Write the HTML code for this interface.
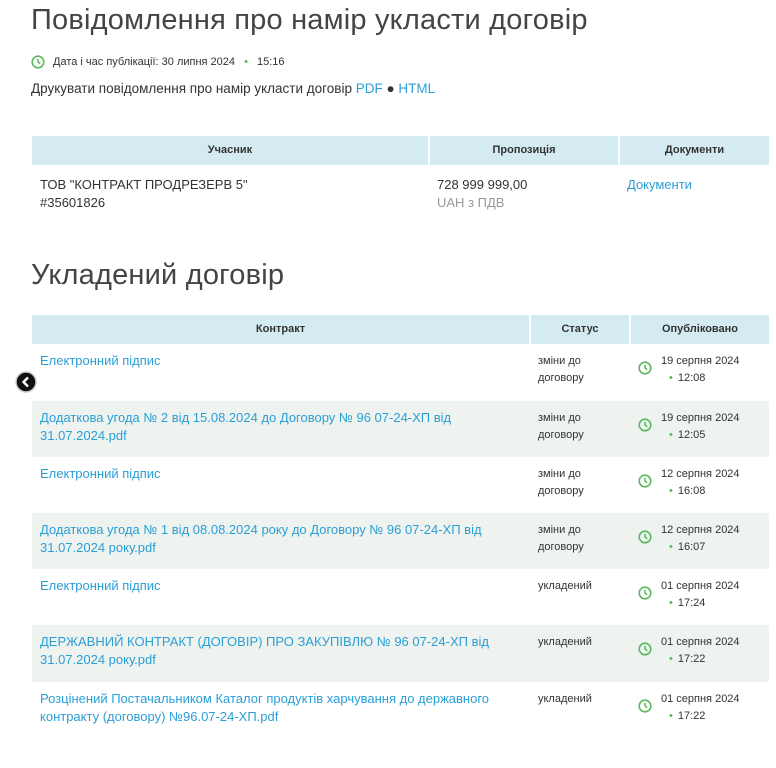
<!DOCTYPE html>
<html><head><meta charset="utf-8"><style>
body{margin:0;width:776px;height:768px;overflow:hidden;background:#fff;font-family:"Liberation Sans","DejaVu Sans",sans-serif;color:#333;position:relative}
.a{position:absolute}
h1{position:absolute;margin:0;font-weight:300;font-size:29px;color:#444;left:31px;white-space:nowrap;letter-spacing:.2px}
.lnk{color:#2a9fd6}
.hd{position:absolute;background:#d5ebf2;font-weight:bold;font-size:11px;color:#333;text-align:center}
.row{position:absolute;left:32px;width:737px}
.g{background:#eff3f0}
.c1{position:absolute;left:8px;top:8px;font-size:13px;line-height:18px;color:#2a9fd6;width:480px}
.c2{position:absolute;left:506px;top:9px;font-size:11px;line-height:17px;color:#333}
.ic{position:absolute;left:606px;top:17px}
.c3{position:absolute;left:629px;top:9px;font-size:11px;line-height:17px;color:#333}
.dot{color:#5cb85c;margin:0 5px 0 8px}
</style></head><body>
<h1 style="top:4px">Повідомлення про намір укласти договір</h1>
<svg class="a" style="left:31px;top:55px" width="14" height="14" viewBox="0 0 14 14"><circle cx="7" cy="7" r="5.8" fill="none" stroke="#5cb85c" stroke-width="1.6"/><path d="M7 3.8V7l2.2 1.6" fill="none" stroke="#5cb85c" stroke-width="1.5"/></svg>
<div class="a" style="left:53px;top:56px;font-size:11px">Дата і час публікації: 30 липня 2024 <span class="dot" style="margin:0 6px">•</span> 15:16</div>
<div class="a" style="left:31px;top:81px;font-size:13.5px">Друкувати повідомлення про намір укласти договір <span class="lnk">PDF</span> ● <span class="lnk">HTML</span></div>
<div class="hd" style="left:32px;top:136px;width:396px;height:29px;line-height:29px">Учасник</div>
<div class="hd" style="left:430px;top:136px;width:188px;height:29px;line-height:29px">Пропозиція</div>
<div class="hd" style="left:620px;top:136px;width:149px;height:29px;line-height:29px">Документи</div>
<div class="a" style="left:40px;top:176px;font-size:13px;line-height:18px">ТОВ "КОНТРАКТ ПРОДРЕЗЕРВ 5"<br>#35601826</div>
<div class="a" style="left:437px;top:176px;font-size:13px;line-height:18px">728 999 999,00<br><span style="color:#999">UAH з ПДВ</span></div>
<div class="a lnk" style="left:627px;top:176px;font-size:13px;line-height:18px">Документи</div>
<h1 style="top:259px">Укладений договір</h1>
<div class="hd" style="left:32px;top:315px;width:497px;height:29px;line-height:29px">Контракт</div>
<div class="hd" style="left:531px;top:315px;width:98px;height:29px;line-height:29px">Статус</div>
<div class="hd" style="left:631px;top:315px;width:138px;height:29px;line-height:29px">Опубліковано</div>

<div class="row" style="top:344px;height:57px"><div class="c1">Електронний підпис</div><div class="c2">зміни до<br>договору</div><svg class="ic" width="14" height="14" viewBox="0 0 14 14"><circle cx="7" cy="7" r="5.8" fill="none" stroke="#5cb85c" stroke-width="1.6"/><path d="M7 3.8V7l2.2 1.6" fill="none" stroke="#5cb85c" stroke-width="1.5"/></svg><div class="c3">19 серпня 2024<br><span class="dot">•</span>12:08</div></div>
<div class="row g" style="top:401px;height:56px"><div class="c1">Додаткова угода № 2 від 15.08.2024 до Договору № 96 07-24-ХП від 31.07.2024.pdf</div><div class="c2">зміни до<br>договору</div><svg class="ic" width="14" height="14" viewBox="0 0 14 14"><circle cx="7" cy="7" r="5.8" fill="none" stroke="#5cb85c" stroke-width="1.6"/><path d="M7 3.8V7l2.2 1.6" fill="none" stroke="#5cb85c" stroke-width="1.5"/></svg><div class="c3">19 серпня 2024<br><span class="dot">•</span>12:05</div></div>
<div class="row" style="top:457px;height:56px"><div class="c1">Електронний підпис</div><div class="c2">зміни до<br>договору</div><svg class="ic" width="14" height="14" viewBox="0 0 14 14"><circle cx="7" cy="7" r="5.8" fill="none" stroke="#5cb85c" stroke-width="1.6"/><path d="M7 3.8V7l2.2 1.6" fill="none" stroke="#5cb85c" stroke-width="1.5"/></svg><div class="c3">12 серпня 2024<br><span class="dot">•</span>16:08</div></div>
<div class="row g" style="top:513px;height:56px"><div class="c1">Додаткова угода № 1 від 08.08.2024 року до Договору № 96 07-24-ХП від 31.07.2024 року.pdf</div><div class="c2">зміни до<br>договору</div><svg class="ic" width="14" height="14" viewBox="0 0 14 14"><circle cx="7" cy="7" r="5.8" fill="none" stroke="#5cb85c" stroke-width="1.6"/><path d="M7 3.8V7l2.2 1.6" fill="none" stroke="#5cb85c" stroke-width="1.5"/></svg><div class="c3">12 серпня 2024<br><span class="dot">•</span>16:07</div></div>
<div class="row" style="top:569px;height:56px"><div class="c1">Електронний підпис</div><div class="c2">укладений</div><svg class="ic" width="14" height="14" viewBox="0 0 14 14"><circle cx="7" cy="7" r="5.8" fill="none" stroke="#5cb85c" stroke-width="1.6"/><path d="M7 3.8V7l2.2 1.6" fill="none" stroke="#5cb85c" stroke-width="1.5"/></svg><div class="c3">01 серпня 2024<br><span class="dot">•</span>17:24</div></div>
<div class="row g" style="top:625px;height:57px"><div class="c1">ДЕРЖАВНИЙ КОНТРАКТ (ДОГОВІР) ПРО ЗАКУПІВЛЮ № 96 07-24-ХП від 31.07.2024 року.pdf</div><div class="c2">укладений</div><svg class="ic" width="14" height="14" viewBox="0 0 14 14"><circle cx="7" cy="7" r="5.8" fill="none" stroke="#5cb85c" stroke-width="1.6"/><path d="M7 3.8V7l2.2 1.6" fill="none" stroke="#5cb85c" stroke-width="1.5"/></svg><div class="c3">01 серпня 2024<br><span class="dot">•</span>17:22</div></div>
<div class="row" style="top:682px;height:56px"><div class="c1">Розцінений Постачальником Каталог продуктів харчування до державного контракту (договору) №96.07-24-ХП.pdf</div><div class="c2">укладений</div><svg class="ic" width="14" height="14" viewBox="0 0 14 14"><circle cx="7" cy="7" r="5.8" fill="none" stroke="#5cb85c" stroke-width="1.6"/><path d="M7 3.8V7l2.2 1.6" fill="none" stroke="#5cb85c" stroke-width="1.5"/></svg><div class="c3">01 серпня 2024<br><span class="dot">•</span>17:22</div></div>

<svg class="a" style="left:15px;top:371px" width="22" height="22" viewBox="0 0 22 22"><circle cx="11" cy="11" r="10" fill="#111" stroke="#ccc" stroke-width="1.5"/><path d="M13 6.5L8.5 11l4.5 4.5" fill="none" stroke="#fff" stroke-width="2.4"/></svg>
</body></html>
